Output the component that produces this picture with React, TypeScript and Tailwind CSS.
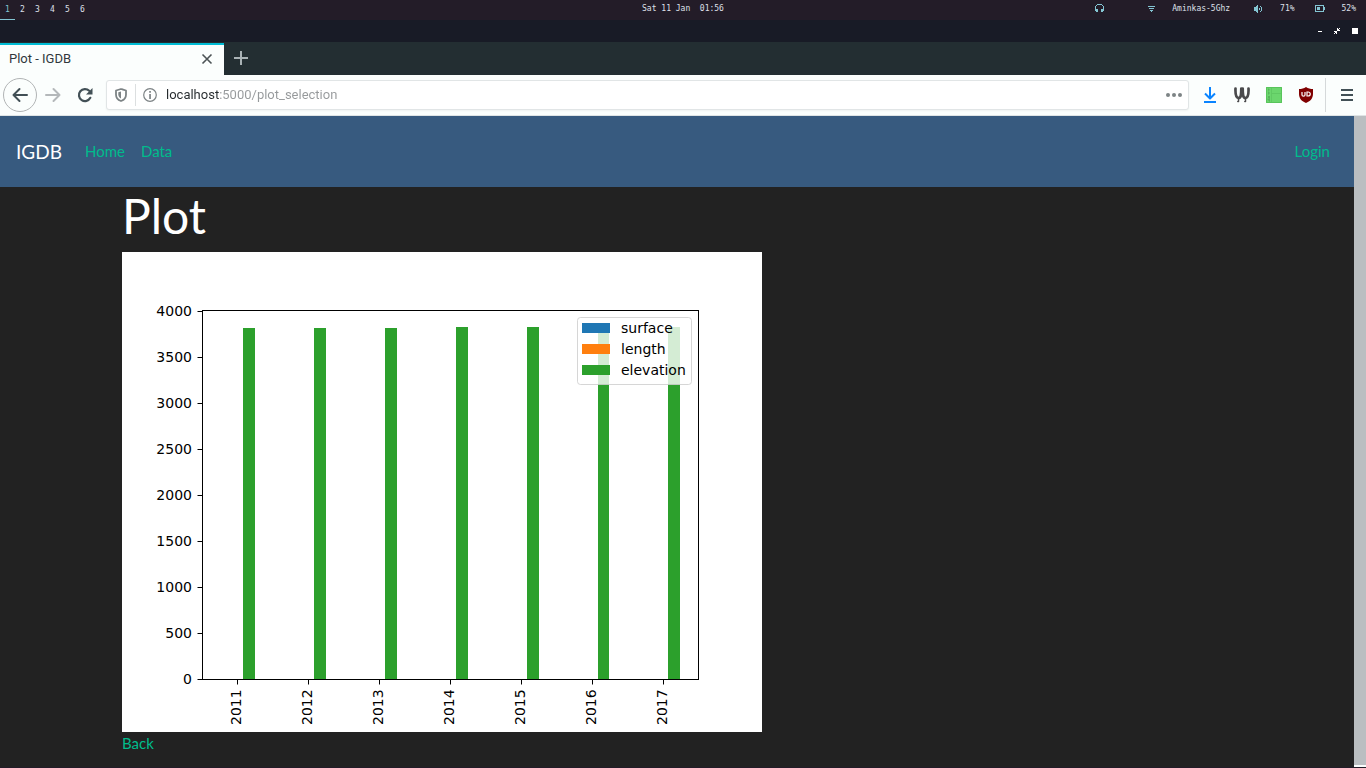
import React from "react";

const years = [
  { year: 2011, tick: 115, bar: 121, top: 76 },
  { year: 2012, tick: 186, bar: 192, top: 76 },
  { year: 2013, tick: 257, bar: 263, top: 76 },
  { year: 2014, tick: 328, bar: 334, top: 75 },
  { year: 2015, tick: 399, bar: 405, top: 75 },
  { year: 2016, tick: 470, bar: 476, top: 75 },
  { year: 2017, tick: 541, bar: 546, top: 75 },
];

const yTicks = [
  { label: "4000", y: 59 },
  { label: "3500", y: 105 },
  { label: "3000", y: 151 },
  { label: "2500", y: 197 },
  { label: "2000", y: 243 },
  { label: "1500", y: 289 },
  { label: "1000", y: 335 },
  { label: "500", y: 381 },
  { label: "0", y: 427 },
];

const legend = [
  { label: "surface", color: "#1f77b4", y: 71 },
  { label: "length", color: "#ff7f0e", y: 92 },
  { label: "elevation", color: "#2ca02c", y: 113 },
];

function StatusBar() {
  return (
    <header className="grid h-5 grid-cols-[1fr_auto_1fr] bg-[#231c28] font-['DejaVu_Sans_Mono',monospace] text-[8px] leading-[18px] text-[#dfe0ea]">
      <nav aria-label="Workspaces" className="flex">
        {[1, 2, 3, 4, 5, 6].map((n) => (
          <button
            key={n}
            type="button"
            className={
              n === 1
                ? "h-5 w-[15px] border-b border-[#84c5d3] text-[#84c5d3]"
                : "h-5 w-[15px] border-b border-transparent"
            }
          >
            {n}
          </button>
        ))}
      </nav>
      <time className="whitespace-pre">Sat 11 Jan  01:56</time>
      <div className="flex justify-end pr-[10px]">
        <svg className="mt-1 mr-11 h-[9px] w-[9px]" viewBox="0 0 9 9" fill="#84c5d3" shapeRendering="crispEdges">
          <path d="M2 0h5v1H2zM1 1h1v1H1zM7 1h1v1H7zM0 2h1v5H0zM8 2h1v5H8zM1 5h2v3H1zM6 5h2v3H6z" />
        </svg>
        <svg className="mt-[6px] mr-[17px] h-[6px] w-[7px]" viewBox="0 0 7 6" fill="#84c5d3" shapeRendering="crispEdges">
          <path d="M0 0h7v1H0zM1 2h5v1H1zM2 4h3v1H2zM3 5h1v1H3z" />
        </svg>
        <span className="mr-6">Aminkas-5Ghz</span>
        <svg className="mt-[5px] mr-[17px] h-[8px] w-[9px]" viewBox="0 0 9 8" fill="#84c5d3" shapeRendering="crispEdges">
          <path d="M0 2h2v4H0zM2 1h1v6H2zM3 0h1v8H3zM5 3h1v2H5zM6 1h1v1H6zM6 6h1v1H6zM7 2h1v4H7z" />
        </svg>
        <span className="mr-5">71%</span>
        <svg className="mt-[5px] mr-[17px] h-[7px] w-[10px]" viewBox="0 0 10 7" fill="#84c5d3" shapeRendering="crispEdges">
          <path fillRule="evenodd" d="M0 0h9v2h1v3H9v2H0zM1 1v5h7V1z" />
          <path d="M2 2h3v3H2z" />
        </svg>
        <span>52%</span>
      </div>
    </header>
  );
}

function TitleBar() {
  return (
    <div className="flex h-[22px] items-center justify-end gap-3 bg-[#181b26] pr-2">
      <button type="button" aria-label="Minimize" className="flex h-[7px] w-1 items-center">
        <svg className="h-px w-1" viewBox="0 0 4 1" fill="#fff">
          <path d="M0 0h4v1H0z" />
        </svg>
      </button>
      <button type="button" aria-label="Restore">
        <svg className="block h-[6px] w-[6px]" viewBox="0 0 6 6" fill="#fff" shapeRendering="crispEdges">
          <path d="M3 0h1v1h1v-1h1v1h-1v1h1v1H3zM0 3h3v3H2V5H1v1H0V5h1V4H0z" />
        </svg>
      </button>
      <button type="button" aria-label="Close" className="h-[6px] w-[6px] bg-white" />
    </div>
  );
}

function TabStrip() {
  return (
    <div className="flex h-[33px] bg-[#232e32]">
      <div className="mt-px flex w-56 items-center justify-between border-t-2 border-[#00bcd4] bg-[#fbfefd] pr-[11px] pb-[2px] pl-[9px] text-[13px] text-[#31383c]">
        <span>Plot - IGDB</span>
        <button type="button" aria-label="Close tab">
          <svg className="block h-3 w-3" viewBox="0 0 12 12" stroke="#4c5356" strokeWidth="1.6" fill="none">
            <path d="M1.500 1.500l9 9M10.500 1.500l-9 9" />
          </svg>
        </button>
      </div>
      <button type="button" aria-label="New tab" className="flex w-[33px] items-center justify-center pb-[2px]">
        <svg className="block h-4 w-4" viewBox="0 0 16 16" stroke="#a9b2b5" strokeWidth="2" fill="none">
          <path d="M8 1v14M1 8h14" />
        </svg>
      </button>
    </div>
  );
}

function Toolbar() {
  return (
    <div className="flex h-[41px] items-center border-b border-[#dfe4e5] bg-[#fbfefd] pl-[3px]">
      <button
        type="button"
        aria-label="Back"
        className="flex h-[34px] w-[34px] items-center justify-center rounded-full border border-[#b1b4b5]"
      >
        <svg className="h-4 w-4" viewBox="0 0 16 16" stroke="#425056" strokeWidth="2" fill="none" strokeLinecap="round" strokeLinejoin="round">
          <path d="M15 8H1.500M7.500 2l-6 6 6 6" />
        </svg>
      </button>
      <button type="button" aria-label="Forward" className="ml-2">
        <svg className="block h-4 w-4" viewBox="0 0 16 16" stroke="#b4b8ba" strokeWidth="2" fill="none" strokeLinecap="round" strokeLinejoin="round">
          <path d="M1 8h13.500M8.500 2l6 6-6 6" />
        </svg>
      </button>
      <button type="button" aria-label="Reload" className="ml-4">
        <svg className="block h-4 w-4" viewBox="0 0 16 16" fill="none">
          <path d="M13.300 10.800A6 6 0 1 1 12.200 3.800" stroke="#425056" strokeWidth="2.200" strokeLinecap="round" />
          <path d="M15.500 1v6.500H9z" fill="#425056" />
        </svg>
      </button>
      <div className="ml-[13px] flex h-[30px] flex-1 items-center rounded-[3px] border border-[#e1e5e6] bg-white shadow-xs">
        <svg className="ml-2 h-[14px] w-3" viewBox="0 0 12 14" fill="none">
          <path d="M6 1l5 1.500v4C11 9.500 9 12 6 13 3 12 1 9.500 1 6.500v-4z" stroke="#7d8385" strokeWidth="1.800" strokeLinejoin="round" />
          <path d="M6 3.500v7C4.200 9.600 3.300 8 3.300 6.300V4.200z" fill="#7d8385" />
        </svg>
        <span className="ml-2 h-[22px] w-px bg-[#dcdfe0]" />
        <svg className="ml-[7px] h-[14px] w-[14px]" viewBox="0 0 14 14" fill="none">
          <circle cx="7" cy="7" r="6.300" stroke="#7d8385" strokeWidth="1.200" />
          <path d="M6.200 3h1.700v1.700H6.200zM6.200 6h1.700v5H6.200z" fill="#7d8385" />
        </svg>
        <input
          type="text"
          aria-label="Address"
          defaultValue="localhost:5000/plot_selection"
          className="ml-[9px] min-w-0 flex-1 bg-[linear-gradient(90deg,#262b2e_54px,#96999b_54px)] bg-clip-text text-[13px] text-transparent outline-none"
        />
        <button type="button" aria-label="Page actions" className="mr-[6px]">
          <svg className="block h-4 w-4" viewBox="0 0 16 16" fill="#7d8385">
            <circle cx="2" cy="8" r="2" />
            <circle cx="8" cy="8" r="2" />
            <circle cx="14" cy="8" r="2" />
          </svg>
        </button>
      </div>
      <div className="flex gap-4 pr-[11px] pl-[13px]">
        <button type="button" aria-label="Downloads">
          <svg className="block h-4 w-4" viewBox="0 0 16 16" fill="none" stroke="#0a84ff" strokeWidth="2">
            <path d="M8 0v11M3 6.500l5 5 5-5M2 15h12" strokeLinejoin="round" />
          </svg>
        </button>
        <button type="button" aria-label="Wallabagger">
          <svg className="block h-4 w-4" viewBox="0 0 16 16" fill="none" stroke="#4a4a4c" strokeLinecap="round" strokeLinejoin="round">
            <path d="M1.500 1.500C1.300 6 1.500 10.500 4.500 11 7 11 7.300 8 7.300 1.500M8.700 1.500c0 6.500.3 9.500 2.800 9.500 3-.5 3.200-5 3-9.500" strokeWidth="2.700" />
            <path d="M4.500 12v2.500H3.800M11.500 12v2.500h-.7" strokeWidth="1.500" />
          </svg>
        </button>
        <button type="button" aria-label="Green extension">
          <svg className="block h-4 w-4" viewBox="0 0 16 16">
            <path d="M0 0h16v16H0z" fill="#6bd66d" />
            <path d="M.5.500h15v15H.5z" fill="none" stroke="#58c45b" />
            <path d="M5.500 1v14M6 6.500h9" fill="none" stroke="#60c963" />
            <path d="M2 1l2 2-2 1 2 2-2 2zM2 9h2v2H2zM1 12l3-1v4z" fill="#58b45c" />
          </svg>
        </button>
        <button type="button" aria-label="uBlock Origin">
          <svg className="block h-4 w-4" viewBox="0 0 16 16" fill="none">
            <path d="M8 0c2 1.500 4.500 2 7 2v5c0 4.500-3 7.500-7 9-4-1.500-7-4.500-7-9V2c2.500 0 5-.5 7-2z" fill="#800000" />
            <path d="M4 5v3c0 1.500 3 1.500 3 0V5M9 5v4h1c3 0 3-4 0-4z" stroke="#fff" strokeWidth="1.200" />
          </svg>
        </button>
      </div>
      <div className="flex h-[34px] items-center border-l border-[#d5d9da] pr-[13px] pl-[15px]">
        <button type="button" aria-label="Open menu">
          <svg className="block h-3 w-3" viewBox="0 0 12 12" fill="#425056">
            <path d="M0 0h12v2H0zM0 5h12v2H0zM0 10h12v2H0z" />
          </svg>
        </button>
      </div>
    </div>
  );
}

function PlotChart() {
  return (
    <svg
      role="img"
      aria-label="Elevation by year"
      className="block h-[480px] w-[640px] bg-white font-['DejaVu_Sans',sans-serif] text-[14px]"
      viewBox="0 0 640 480"
    >
      {years.map((d) => (
        <rect key={d.year} x={d.bar} y={d.top} width={d.year === 2016 ? 11 : 12} height={427 - d.top} fill="#2ca02c" />
      ))}
      <rect x="80.5" y="58.5" width="496" height="369" fill="none" stroke="#000" />
      {yTicks.map((t) => (
        <g key={t.label}>
          <path d={`M75.500 ${t.y + 0.5}H80.500`} stroke="#000" />
          <text x="70" y={t.y + 5} textAnchor="end">
            {t.label}
          </text>
        </g>
      ))}
      {years.map((d) => (
        <g key={d.year}>
          <path d={`M${d.tick + 0.5} 427.500V432.500`} stroke="#000" />
          <text transform={`translate(${d.tick + 4} 473) rotate(-90)`}>{d.year}</text>
        </g>
      ))}
      <rect x="455.5" y="65.5" width="114" height="67" rx="3" fill="#fff" fillOpacity="0.8" stroke="#ccc" strokeOpacity="0.8" />
      {legend.map((l) => (
        <g key={l.label}>
          <rect x="460" y={l.y} width="28" height="10" fill={l.color} />
          <text x="499" y={l.y + 10}>
            {l.label}
          </text>
        </g>
      ))}
    </svg>
  );
}

function Page() {
  return (
    <div className="flex-1 bg-[#222222] font-[Lato,sans-serif] text-[15px] leading-[23px]">
      <nav className="flex h-[71px] items-center bg-[#375a7f] px-4 text-[#00bc8c]">
        <a href="#" className="mr-[23px] text-[19px] text-white">
          IGDB
        </a>
        <div className="flex flex-1 gap-4">
          <a href="#home">Home</a>
          <a href="#data">Data</a>
        </div>
        <a href="#login" className="mr-2">
          Login
        </a>
      </nav>
      <main className="mx-auto max-w-[1140px] px-[15px]">
        <h1 className="mb-2 text-[48px] leading-[57px] text-white">Plot</h1>
        <PlotChart />
        <a href="#back" className="text-[#00bc8c]">
          Back
        </a>
      </main>
    </div>
  );
}

export default function App() {
  return (
    <div className="flex min-h-screen flex-col bg-[#231c28] font-[Roboto,sans-serif]">
      <StatusBar />
      <TitleBar />
      <TabStrip />
      <Toolbar />
      <div className="mb-px flex flex-1">
        <Page />
        <div className="w-3 border-b-2 border-[#fbfefd] bg-[#babec1]" />
      </div>
    </div>
  );
}
